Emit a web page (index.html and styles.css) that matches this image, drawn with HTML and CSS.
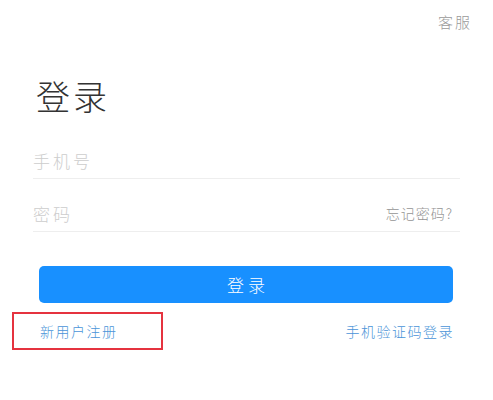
FILE: index.html
```html
<!DOCTYPE html>
<html lang="zh-CN">
<head>
    <meta charset="UTF-8">
    <meta name="viewport" content="width=device-width, initial-scale=1.0">
    <title>登录</title>
    <link rel="stylesheet" href="styles.css">
</head>
<body>
    <header class="top">
        <a class="service">客服</a>
    </header>
    <main class="main">
        <h1 class="title">登录</h1>
        <div class="field">
            <input type="text" placeholder="手机号">
        </div>
        <div class="field">
            <input type="password" placeholder="密码">
            <a class="forgot">忘记密码?</a>
        </div>
        <button class="btn">登录</button>
        <div class="links">
            <a class="register">新用户注册</a>
            <a class="sms">手机验证码登录</a>
        </div>
    </main>
</body>
</html>
```

FILE: styles.css
```css
body {
    margin: 0;
    background: #fff;
    font-family: "Noto Sans CJK SC", "Noto Sans", sans-serif;
    font-weight: 300;
    color: #333;
}
a {
    text-decoration: none;
}
.top {
    height: 42px;
    display: flex;
    justify-content: flex-end;
    align-items: center;
    padding-right: 21px;
}
.service {
    font-size: 15px;
    letter-spacing: 2px;
    color: #9a9a9a;
}
.main {
    padding: 0 33px;
}
.title {
    margin: 34px 0 11px 3px;
    font-size: 34px;
    line-height: 40px;
    letter-spacing: 3px;
    font-weight: 300;
    color: #333;
}
.field {
    height: 52px;
    display: flex;
    align-items: flex-end;
    padding-bottom: 6px;
    box-sizing: border-box;
    border-bottom: 1px solid #eee;
}
.field + .field {
    height: 53px;
}
.field input {
    flex: 1;
    border: none;
    outline: none;
    padding: 0;
    height: 24px;
    font-family: inherit;
    font-weight: 300;
    font-size: 17px;
    letter-spacing: 3px;
    color: #333;
}
.field input::placeholder {
    color: #cdcdcd;
}
.forgot {
    font-size: 14px;
    line-height: 24px;
    letter-spacing: 1px;
    color: #959595;
    margin-right: 7px;
}
.btn {
    display: block;
    width: calc(100% - 13px);
    margin: 34px 7px 0 6px;
    height: 37px;
    border: none;
    border-radius: 5px;
    background: #1890ff;
    color: #fff;
    font-family: inherit;
    font-weight: 300;
    font-size: 17px;
    letter-spacing: 4px;
    padding: 0 0 0 4px;
}
.links {
    display: flex;
    justify-content: space-between;
    align-items: center;
    margin: 9px 0 0 -21px;
}
.register {
    box-sizing: border-box;
    width: 151px;
    height: 38px;
    border: 2px solid #e5333f;
    padding-left: 26px;
    display: flex;
    align-items: center;
    font-size: 14px;
    letter-spacing: 1.5px;
    color: #4a94d8;
}
.sms {
    font-size: 14px;
    letter-spacing: 1.5px;
    color: #4a94d8;
    margin-right: 6px;
}
```
